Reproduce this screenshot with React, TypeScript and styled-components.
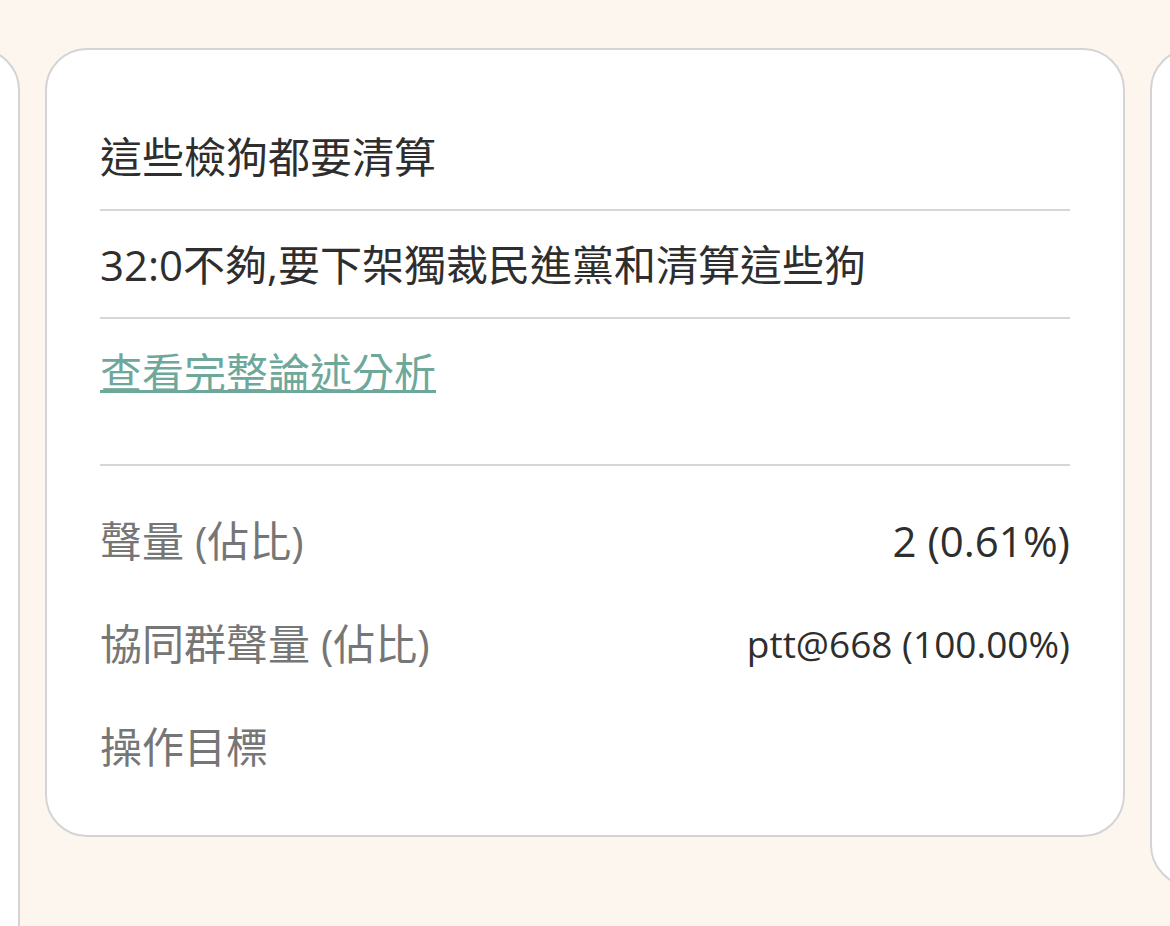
import React from "react";
import styled, { createGlobalStyle } from "styled-components";

const GlobalStyle = createGlobalStyle`
  html, body {
    margin: 0;
    padding: 0;
    background: #fdf6ef;
    overflow: hidden;
  }
  body {
    font-family: "Open Sans", "Noto Sans CJK TC", sans-serif;
  }
  * { box-sizing: border-box; }
`;

const Viewport = styled.div`
  width: 1170px;
  height: 926px;
  overflow: hidden;
  background: #fdf6ef;
`;

const Track = styled.div`
  display: flex;
  align-items: flex-start;
  gap: 25px;
  padding-top: 48px;
  margin-left: -1060px;
`;

const Card = styled.div<{ $minHeight?: number }>`
  flex: 0 0 1080px;
  width: 1080px;
  min-height: ${(p) => (p.$minHeight ? `${p.$minHeight}px` : "auto")};
  background: #ffffff;
  border: 2px solid #d4d4d4;
  border-radius: 42px;
  padding: 53px 53px 57px;
  display: flex;
  flex-direction: column;
`;

const TextRow = styled.div<{ $last?: boolean }>`
  padding: 22px 0 ${(p) => (p.$last ? "60px" : "21px")};
  border-bottom: 2px solid #d6d6d6;
  font-size: 42px;
  line-height: 63px;
  color: #2e2e2e;
  white-space: nowrap;
`;

const Link = styled.a`
  color: #6ea89a;
  text-decoration: underline;
  text-decoration-thickness: 3px;
  text-underline-offset: 1px;
  cursor: pointer;
`;

const Stats = styled.div`
  display: flex;
  flex-direction: column;
  gap: 40px;
  padding-top: 43px;
`;

const StatRow = styled.div`
  display: flex;
  align-items: center;
  justify-content: space-between;
  height: 63px;
`;

const Label = styled.span`
  font-size: 42px;
  line-height: 63px;
  color: #767676;
`;

const Value = styled.span<{ $size?: number }>`
  font-size: ${(p) => p.$size ?? 42}px;
  line-height: 63px;
  color: #2e2e2e;
`;

export default function App() {
  return (
    <Viewport>
      <GlobalStyle />
      <Track>
        <Card $minHeight={920} />
        <Card>
          <TextRow>這些檢狗都要清算</TextRow>
          <TextRow>32:0不夠,要下架獨裁民進黨和清算這些狗</TextRow>
          <TextRow $last>
            <Link>查看完整論述分析</Link>
          </TextRow>
          <Stats>
            <StatRow>
              <Label>聲量 (佔比)</Label>
              <Value>2 (0.61%)</Value>
            </StatRow>
            <StatRow>
              <Label>協同群聲量 (佔比)</Label>
              <Value $size={37}>ptt@668 (100.00%)</Value>
            </StatRow>
            <StatRow>
              <Label>操作目標</Label>
            </StatRow>
          </Stats>
        </Card>
        <Card $minHeight={839} />
      </Track>
    </Viewport>
  );
}
